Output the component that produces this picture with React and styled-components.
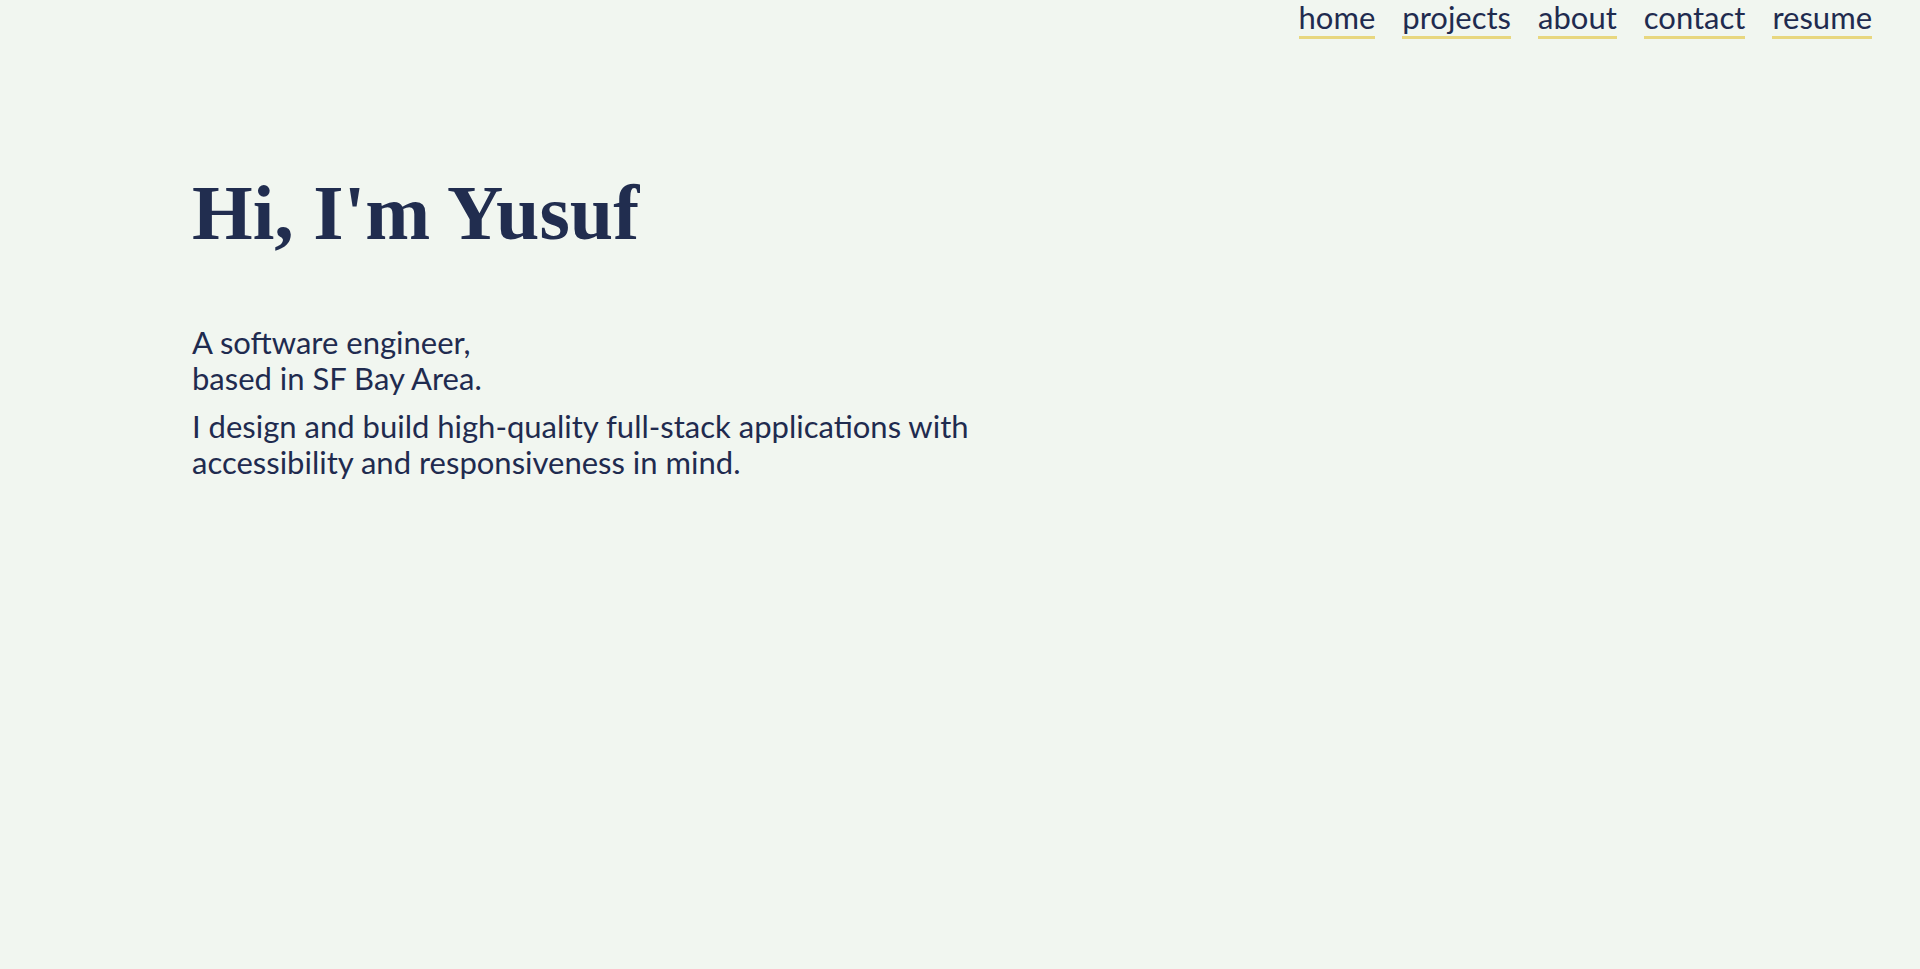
import React from "react";
import styled, { createGlobalStyle } from "styled-components";

const GlobalStyle = createGlobalStyle`
  html, body {
    margin: 0;
    padding: 0;
    background: #f1f6f0;
  }
  body {
    font-family: Lato, "Noto Sans", sans-serif;
    color: #1f2b4f;
  }
`;

const Page = styled.div`
  min-height: 969px;
  background: #f1f6f0;
`;

const Nav = styled.nav`
  display: flex;
  justify-content: flex-end;
  gap: 27px;
  padding: 0 48px 0 0;
  height: 50px;
`;

const NavLink = styled.a`
  font-family: Lato, "Noto Sans", sans-serif;
  font-size: 31px;
  color: #1f2b4f;
  text-decoration: none;
  line-height: 34px;
  height: 36px;
  border-bottom: 3px solid #e8d77f;
  cursor: pointer;
`;

const Hero = styled.main`
  padding: 124px 0 0 192px;
`;

const Title = styled.h1`
  font-family: "Liberation Serif", "Times New Roman", serif;
  font-weight: 700;
  font-size: 78px;
  line-height: 1;
  margin: 0 0 72px;
  color: #212d4f;
`;

const Para = styled.p`
  font-family: Lato, "Noto Sans", sans-serif;
  font-size: 31px;
  line-height: 36px;
  margin: 0 0 12px;
  max-width: 820px;
`;

export default function App() {
  const links = ["home", "projects", "about", "contact", "resume"];
  return (
    <Page>
      <GlobalStyle />
      <Nav>
        {links.map((l) => (
          <NavLink key={l}>{l}</NavLink>
        ))}
      </Nav>
      <Hero>
        <Title>Hi, I'm Yusuf</Title>
        <Para>
          A software engineer,
          <br />
          based in SF Bay Area.
        </Para>
        <Para>
          I design and build high-quality full-stack applications with
          <br />
          accessibility and responsiveness in mind.
        </Para>
      </Hero>
    </Page>
  );
}
